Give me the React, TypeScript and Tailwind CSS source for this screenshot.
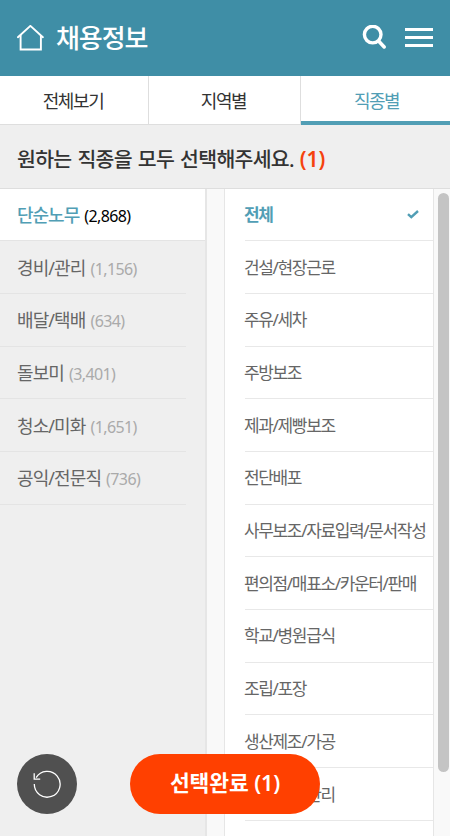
import { useState } from 'react';

const TABS = ['전체보기', '지역별', '직종별'];

const CATEGORIES: { name: string; count: string }[] = [
    { name: '단순노무', count: '2,868' },
    { name: '경비/관리', count: '1,156' },
    { name: '배달/택배', count: '634' },
    { name: '돌보미', count: '3,401' },
    { name: '청소/미화', count: '1,651' },
    { name: '공익/전문직', count: '736' },
];

const JOBS = [
    '전체',
    '건설/현장근로',
    '주유/세차',
    '주방보조',
    '제과/제빵보조',
    '전단배포',
    '사무보조/자료입력/문서작성',
    '편의점/매표소/카운터/판매',
    '학교/병원급식',
    '조립/포장',
    '생산제조/가공',
    '품질검사/관리',
];

function Header() {
    return (
        <header className="flex h-[76px] shrink-0 items-center bg-[#3f8ea6] pr-[17px] pl-[17px] text-white">
            <svg width="27" height="27" viewBox="0 0 27 27" fill="none" stroke="currentColor" strokeWidth="1.9">
                <path d="M.9 12.2 13.4.9l12.5 11.3" strokeLinecap="round" />
                <path d="M3.6 10v14.5h20.3V10" />
            </svg>
            <h1 className="ml-[12px] text-[26px] leading-none font-medium tracking-[-1.1px]">채용정보</h1>
            <div className="ml-auto flex items-center gap-[18px]">
                <svg width="25" height="26" viewBox="0 0 25 26" fill="none" stroke="currentColor">
                    <circle cx="10.7" cy="9.6" r="8.3" strokeWidth="3.4" />
                    <path d="m16.8 16.3 5.4 5.6" strokeWidth="3.6" strokeLinecap="round" />
                </svg>
                <div className="flex w-7 flex-col gap-[5px] pb-[2px]">
                    <span className="h-[3px] bg-white" />
                    <span className="h-[3px] bg-white" />
                    <span className="h-[3px] bg-white" />
                </div>
            </div>
        </header>
    );
}

function TabBar() {
    const [active, setActive] = useState('직종별');

    return (
        <nav className="grid h-[49px] shrink-0 grid-cols-[149px_152px_149px] bg-white">
            {TABS.map((tab) => (
                <button
                    key={tab}
                    onClick={() => { setActive(tab); }}
                    className={
                        tab === active
                            ? 'border-b-4 border-[#519eb5] pt-[4px] pl-[2px] text-[18px] leading-none tracking-[-1.5px] text-[#519eb5]'
                            : 'border-r border-b border-[#dedede] pt-px pr-[2px] text-[18px] leading-none tracking-[-1.4px] text-[#333]'
                    }
                >
                    {tab}
                </button>
            ))}
        </nav>
    );
}

function CategoryList() {
    const [selected, setSelected] = useState('단순노무');

    return (
        <ul className="w-[207px] shrink-0 border-r-2 border-[#e6e6e6] bg-[#efefef]">
            {CATEGORIES.map(({ name, count }) => (
                <li
                    key={name}
                    onClick={() => { setSelected(name); }}
                    className={name === selected ? 'bg-white' : 'pr-[19px]'}
                >
                    <div className="flex h-[52.7px] items-center gap-[5px] border-b border-[#e4e4e4] pt-px pl-[17px] leading-none whitespace-nowrap">
                        <span
                            className={
                                name === selected
                                    ? 'text-[18px] font-medium tracking-[-1px] text-[#519eb5]'
                                    : 'text-[18px] tracking-[-0.9px] text-[#666]'
                            }
                        >
                            {name}
                        </span>
                        <span
                            className={
                                name === selected
                                    ? 'pt-[2px] text-[16px] tracking-[-0.6px] text-black'
                                    : 'pt-[2px] text-[16px] tracking-[-0.6px] text-[#aaa]'
                            }
                        >
                            ({count})
                        </span>
                    </div>
                </li>
            ))}
        </ul>
    );
}

function JobList() {
    const [selected, setSelected] = useState('전체');

    return (
        <ul className="ml-[17px] w-[210px] shrink-0 border-x border-[#e6e6e6] bg-white pl-5">
            {JOBS.map((job) => (
                <li
                    key={job}
                    onClick={() => { setSelected(job); }}
                    className="flex h-[52.7px] items-center justify-between border-b border-[#e8e8e8] pr-[14px] text-[17px] leading-none tracking-[-1.35px] whitespace-nowrap text-[#666]"
                >
                    {job === selected ? (
                        <>
                            <span className="-ml-px font-bold text-[#519eb5]">{job}</span>
                            <svg width="12" height="9" viewBox="0 0 12 9" fill="none" stroke="#519eb5" strokeWidth="2.4">
                                <path d="m1 4.2 3.3 3L11 1" />
                            </svg>
                        </>
                    ) : (
                        <span className="-ml-px">{job}</span>
                    )}
                </li>
            ))}
        </ul>
    );
}

export default function App() {
    return (
        <div className="relative flex h-[836px] w-[450px] flex-col overflow-hidden bg-[#f9f9f9] font-['Noto_Sans','Noto_Sans_CJK_KR',sans-serif]">
            <Header />
            <TabBar />
            <div className="flex h-[63.6px] shrink-0 items-center border-b border-[#dedede] bg-[#efefef] pt-[7px] pl-[17px]">
                <p className="text-[20.5px] leading-none font-medium tracking-[-0.7px] [word-spacing:1.3px] whitespace-nowrap text-[#333]">
                    원하는 직종을 모두 선택해주세요.{' '}
                    <span className="text-[21px] font-semibold tracking-[-0.1px] text-[#f5420d]">(1)</span>
                </p>
            </div>
            <main className="flex min-h-0 flex-1">
                <CategoryList />
                <JobList />
                <div className="ml-1 h-[583px] w-[11px] pt-[4px]">
                    <div className="h-full w-full rounded-full bg-[#c4c4c4]" />
                </div>
            </main>
            <div className="absolute bottom-[22px] left-[17px] flex items-center">
                <button className="flex size-[60px] items-center justify-center rounded-full bg-[#505050]">
                    <svg width="28" height="28" viewBox="0 0 28 28" fill="none" stroke="#fff" strokeWidth="1.3">
                        <path d="M1.3 14A12.9 12.9 0 1 0 3.1 7.7" />
                        <path d="M1.2 3.2v6h6" />
                    </svg>
                </button>
                <button className="ml-[53px] h-[60px] w-[190px] rounded-full bg-[#ff4000] pb-[2px] text-[21.5px] leading-none font-semibold tracking-[-0.1px] text-white">
                    선택완료 (1)
                </button>
            </div>
        </div>
    );
}
